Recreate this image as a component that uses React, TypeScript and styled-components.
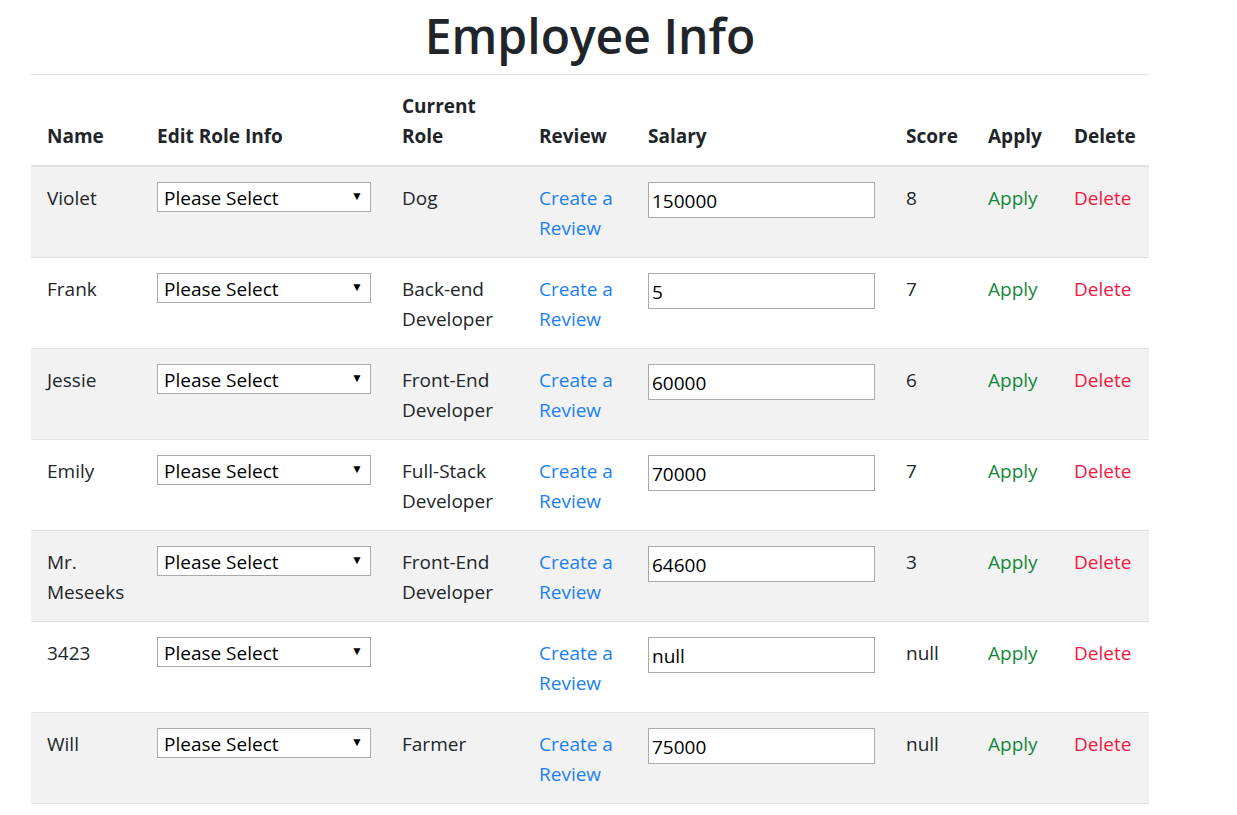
import React from "react";
import styled, { createGlobalStyle } from "styled-components";

const GlobalStyle = createGlobalStyle`
  html, body { margin: 0; padding: 0; background: #fff; }
  body {
    font-family: "Open Sans", "Noto Sans", "Liberation Sans", sans-serif;
    color: #212529;
  }
`;

const Page = styled.div`
  width: 1118px;
  margin-left: 31px;
`;

const Title = styled.h1`
  margin: 6px 0 8px;
  height: 60px;
  font-size: 48px;
  line-height: 60px;
  font-weight: 600;
  text-align: center;
  color: #212529;
`;

const Table = styled.table`
  width: 1118px;
  border-collapse: collapse;
  table-layout: fixed;
  font-size: 19px;
  line-height: 30px;
`;

const Th = styled.th<{ $first?: boolean }>`
  padding: 16px 15px 14px ${(p) => (p.$first ? "16px" : "15px")};
  text-align: left;
  vertical-align: bottom;
  font-weight: 700;
  border-top: 1px solid #dee2e6;
  border-bottom: 2px solid #dee2e6;
`;

const Row = styled.tr<{ $striped: boolean }>`
  background: ${(p) => (p.$striped ? "#f2f2f2" : "#fff")};
`;

const Td = styled.td<{ $first?: boolean }>`
  padding: 15px 15px 15px ${(p) => (p.$first ? "16px" : "15px")};
  vertical-align: top;
  border-top: 1px solid #dee2e6;
  border-bottom: 1px solid #dee2e6;
`;

const CellText = styled.span`
  position: relative;
  top: 1px;
`;

const SelectWrap = styled.div`
  position: relative;
  width: 214px;
  height: 30px;
`;

const Select = styled.select`
  appearance: none;
  -webkit-appearance: none;
  box-sizing: border-box;
  width: 214px;
  height: 30px;
  margin: 0;
  padding: 1px 24px 0 6px;
  border: 1px solid #a9a9a9;
  border-radius: 0;
  background: #fff;
  font-family: inherit;
  font-size: 19px;
  line-height: 28px;
  color: #000;
`;

const Arrow = styled.span`
  position: absolute;
  right: 8px;
  top: 8px;
  font-size: 12px;
  line-height: 12px;
  color: #000;
  pointer-events: none;
`;

const SalaryInput = styled.input`
  box-sizing: border-box;
  width: 227px;
  height: 36px;
  margin: 0;
  padding: 2px 3px 0;
  border: 1px solid #a9a9a9;
  border-radius: 0;
  background: #fff;
  font-family: inherit;
  font-size: 19px;
  color: #000;
`;

const Action = styled.a<{ $color: string }>`
  position: relative;
  top: 1px;
  color: ${(p) => p.$color};
  text-decoration: none;
  cursor: pointer;
`;

type Employee = {
  name: string;
  role: string;
  salary: string;
  score: string;
};

const employees: Employee[] = [
  { name: "Violet", role: "Dog", salary: "150000", score: "8" },
  { name: "Frank", role: "Back-end Developer", salary: "5", score: "7" },
  { name: "Jessie", role: "Front-End Developer", salary: "60000", score: "6" },
  { name: "Emily", role: "Full-Stack Developer", salary: "70000", score: "7" },
  { name: "Mr. Meseeks", role: "Front-End Developer", salary: "64600", score: "3" },
  { name: "3423", role: "", salary: "null", score: "null" },
  { name: "Will", role: "Farmer", salary: "75000", score: "null" },
];

const colWidths = [111, 245, 137, 109, 258, 82, 86, 90];

export default function App() {
  return (
    <>
      <GlobalStyle />
      <Page>
        <Title>Employee Info</Title>
        <Table>
          <colgroup>
            {colWidths.map((w, i) => (
              <col key={i} style={{ width: w }} />
            ))}
          </colgroup>
          <thead>
            <tr>
              <Th $first>Name</Th>
              <Th>Edit Role Info</Th>
              <Th>Current Role</Th>
              <Th>Review</Th>
              <Th>Salary</Th>
              <Th>Score</Th>
              <Th>Apply</Th>
              <Th>Delete</Th>
            </tr>
          </thead>
          <tbody>
            {employees.map((e, i) => (
              <Row key={i} $striped={i % 2 === 0}>
                <Td $first>
                  <CellText>{e.name}</CellText>
                </Td>
                <Td>
                  <SelectWrap>
                    <Select defaultValue="">
                      <option value="">Please Select</option>
                    </Select>
                    <Arrow>▼</Arrow>
                  </SelectWrap>
                </Td>
                <Td>
                  <CellText>{e.role}</CellText>
                </Td>
                <Td>
                  <Action $color="#1a7ff6">Create a Review</Action>
                </Td>
                <Td>
                  <SalaryInput defaultValue={e.salary} />
                </Td>
                <Td>
                  <CellText>{e.score}</CellText>
                </Td>
                <Td>
                  <Action $color="#13873c">Apply</Action>
                </Td>
                <Td>
                  <Action $color="#f5173f">Delete</Action>
                </Td>
              </Row>
            ))}
          </tbody>
        </Table>
      </Page>
    </>
  );
}
